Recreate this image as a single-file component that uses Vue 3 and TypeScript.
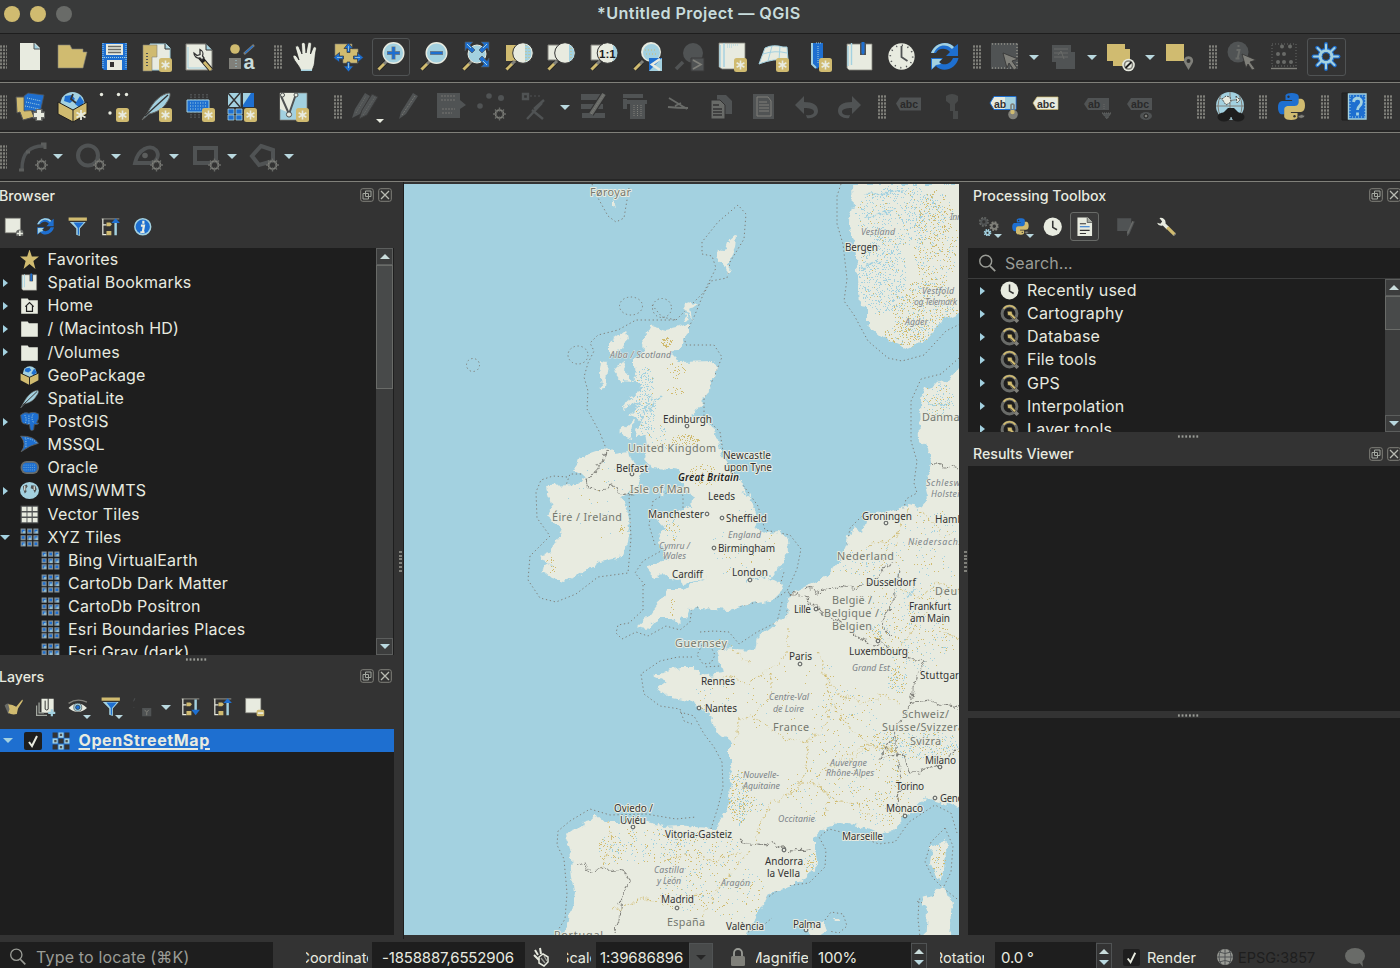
<script setup lang="ts">
interface Item { k: 'i' | 'h' | 'a' | 'g' | 's'; n?: string; w?: number; on?: boolean; menu?: boolean }
const I = (...names: string[]): Item[] => names.map(n => ({ k: 'i' as const, n }))
const H = (w = 20): Item => ({ k: 'h', w })
const A: Item = { k: 'a' }
const G = (w: number): Item => ({ k: 'g', w })

const bar1: Item[] = [
  ...I('new', 'open', 'save', 'layout', 'manager', 'style'), G(7), H(14),
  ...I('pan', 'pansel'), { k: 'i', n: 'zoomin', on: true },
  ...I('zoomout', 'zoomfull', 'zoomsel', 'zoomlayer', 'zoom11', 'zoomlast', 'zoomnext', 'newmap', 'new3d', 'newbook', 'book', 'clock', 'refresh'), G(3), H(15),
  ...I('select'), A, ...I('selval'), A, ...I('desel'), A, ...I('selloc'), G(5), H(15),
  ...I('identify', 'table'), { k: 'i', n: 'gear', on: true },
]
const bar2: Item[] = [
  ...I('dsm', 'gpkg', 'shp', 'feather', 'mem', 'mesh'), G(10), ...I('gpx'), G(18), H(12),
  { k: 'i', n: 'pencils', menu: true }, ...I('pencil', 'savee', 'addpt', 'vertex'), A, ...I('multi', 'trash', 'cut', 'copy', 'paste', 'undo', 'redo'),
  G(6), H(13), ...I('lab0', 'pin'), G(9), ...I('lab1', 'lab2'), G(9), ...I('lab3', 'lab4'),
  G(35), H(15), ...I('web'), G(3), H(17), ...I('python'), G(3), H(17), ...I('help'), H(24),
]
const bar3: Item[] = [
  ...I('arc'), A, ...I('circle'), A, ...I('ellipse'), A, ...I('rect'), A, ...I('poly'), A,
]

const tree = [
  ['star', 'Favorites', ''], ['book', 'Spatial Bookmarks', 'c'], ['home', 'Home', 'c'], ['folder', '/ (Macintosh HD)', 'c'],
  ['folder', '/Volumes', 'c'], ['gpkg2', 'GeoPackage', ''], ['feather2', 'SpatiaLite', ''], ['pg', 'PostGIS', 'c'],
  ['mssql', 'MSSQL', ''], ['oracle', 'Oracle', ''], ['globe', 'WMS/WMTS', 'c'], ['vtiles', 'Vector Tiles', ''], ['tiles', 'XYZ Tiles', 'o'],
  ['tiles', 'Bing VirtualEarth', 'n'], ['tiles', 'CartoDb Dark Matter', 'n'], ['tiles', 'CartoDb Positron', 'n'],
  ['tiles', 'Esri Boundaries Places', 'n'], ['tiles', 'Esri Gray (dark)', 'n'],
]
const algs = ['Recently used', 'Cartography', 'Database', 'File tools', 'GPS', 'Interpolation', 'Layer tools']

type L = [string, number, number, number, string]
const labels: L[] = [
  ['Føroyar', 590, 631, 192, 'g'], ['Bergen', 845, 878, 247, 'd'], ['Vestland', 861, 895, 231, 'r'], ['Inn', 950, 962, 216, 'r'],
  ['Vestfold', 922, 954, 290, 'r'], ['og Telemark', 914, 957, 301, 'r'], ['Agder', 905, 928, 321, 'r'],
  ['Alba / Scotland', 610, 671, 354, 'r'], ['Edinburgh', 663, 712, 419, 'd'], ['United Kingdom', 628, 716, 448, 'g'],
  ['Newcastle', 723, 771, 455, 'd'], ['upon Tyne', 724, 772, 467, 'd'], ['Belfast', 616, 648, 468, 'd'],
  ['Great Britain', 678, 739, 477, 'b'], ['Isle of Man', 630, 690, 489, 'g'], ['Leeds', 708, 735, 496, 'd'],
  ['Manchester', 648, 704, 514, 'd'], ['Sheffield', 726, 767, 518, 'd'], ['Éire / Ireland', 552, 622, 517, 'g'],
  ['England', 728, 761, 534, 'r'], ['Birmingham', 718, 775, 548, 'd'], ['Cymru /', 659, 690, 545, 'r'], ['Wales', 663, 686, 555, 'r'],
  ['Cardiff', 672, 703, 574, 'd'], ['London', 732, 768, 572, 'd'], ['Guernsey', 675, 727, 643, 'g'], ['Rennes', 701, 735, 681, 'd'],
  ['Nantes', 705, 737, 708, 'd'], ['Paris', 789, 812, 656, 'd'], ['France', 773, 809, 727, 'g'], ['Lille', 794, 811, 609, 'd'],
  ['België /', 832, 872, 600, 'g'], ['Belgique /', 824, 879, 613, 'g'], ['Belgien', 832, 872, 626, 'g'], ['Nederland', 837, 894, 556, 'g'],
  ['Düsseldorf', 866, 916, 582, 'd'], ['Deut', 935, 962, 591, 'g'], ['Frankfurt', 909, 951, 606, 'd'], ['am Main', 910, 950, 618, 'd'],
  ['Luxembourg', 849, 908, 651, 'd'], ['Grand Est', 852, 890, 667, 'r'], ['Stuttgart', 920, 963, 675, 'd'],
  ['Centre-Val', 769, 809, 696, 'r'], ['de Loire', 773, 804, 708, 'r'], ['Schweiz/', 902, 949, 714, 'g'], ['Suisse/Svizzera', 882, 964, 727, 'g'],
  ['Svizra', 910, 941, 741, 'g'], ['Auvergne', 830, 867, 762, 'r'], ['Rhône-Alpes', 826, 874, 772, 'r'], ['Milano', 925, 956, 760, 'd'],
  ['Torino', 896, 924, 786, 'd'], ['Genova', 940, 973, 798, 'd'], ['Monaco', 886, 923, 808, 'd'], ['Nouvelle-', 743, 779, 774, 'r'],
  ['Aquitaine', 743, 780, 785, 'r'], ['Occitanie', 778, 815, 818, 'r'], ['Marseille', 842, 883, 836, 'd'], ['Oviedo /', 614, 653, 808, 'd'],
  ['Uviéu', 620, 646, 820, 'd'], ['Vitoria-Gasteiz', 665, 732, 834, 'd'], ['Andorra', 765, 803, 861, 'd'], ['la Vella', 767, 800, 873, 'd'],
  ['Castilla', 654, 684, 869, 'r'], ['y León', 657, 681, 880, 'r'], ['Aragón', 721, 750, 882, 'r'], ['Madrid', 661, 694, 899, 'd'],
  ['España', 667, 705, 922, 'g'], ['València', 726, 764, 926, 'd'], ['Palma', 793, 821, 924, 'd'], ['Portugal', 554, 603, 935, 'g'],
  ['Danmark', 922, 970, 417, 'g'], ['Schleswig-', 926, 972, 482, 'r'], ['Holstein', 931, 965, 493, 'r'], ['Groningen', 862, 912, 516, 'd'],
  ['Hamburg', 935, 980, 519, 'd'], ['Niedersachsen', 908, 973, 541, 'r'],
]
const towns = [[750, 580], [722, 518], [714, 548], [816, 609], [800, 664], [878, 641], [784, 850], [677, 908], [905, 816], [935, 798], [687, 426], [632, 474], [633, 827], [707, 514], [699, 708], [940, 767], [886, 523], [806, 930]]

let seed = 7
const rnd = () => { seed = (seed * 16807) % 2147483647; return seed / 2147483647 }
// centre x, centre y, radius x, radius y, dots, blue share
const spots = [
  [900, 215, 45, 30, 520, 0.9], [882, 275, 24, 40, 520, 0.95], [935, 240, 22, 50, 420, 0.35], [925, 310, 32, 30, 560, 0.5], [905, 335, 22, 12, 120, 0.3],
  [667, 342, 6, 5, 45, 0], [676, 370, 10, 8, 26, 0], [674, 390, 10, 5, 16, 0], [645, 400, 10, 35, 240, 0.95], [685, 440, 14, 6, 70, 0], [703, 475, 14, 12, 60, 0],
  [658, 440, 10, 16, 40, 0.5], [672, 527, 8, 14, 44, 0.4], [672, 608, 3, 10, 10, 0], [622, 530, 3, 6, 14, 0], [550, 565, 6, 8, 16, 0],
  [738, 797, 10, 28, 200, 0.5], [745, 805, 18, 10, 70, 0.5], [645, 845, 45, 18, 150, 0.5], [610, 850, 14, 16, 60, 0.4], [700, 850, 40, 20, 160, 0.5], [685, 890, 30, 22, 120, 0.5],
  [735, 890, 30, 30, 100, 0.4], [925, 745, 36, 16, 260, 0.6], [885, 742, 14, 12, 70, 0.6], [915, 640, 40, 30, 200, 0.5], [897, 680, 10, 14, 90, 0.4], [905, 580, 50, 40, 220, 0.5],
  [880, 790, 32, 36, 200, 0.3], [850, 730, 40, 40, 120, 0.4], [815, 790, 30, 30, 80, 0.3], [850, 560, 30, 14, 60, 0.6], [938, 400, 16, 18, 120, 0.7], [810, 862, 6, 12, 60, 0.5],
  [938, 862, 7, 18, 50, 0.3], [800, 700, 60, 40, 90, 0.3], [745, 545, 35, 40, 70, 0.6], [600, 500, 35, 40, 30, 0.7], [715, 700, 22, 22, 40, 0.5], [930, 525, 28, 16, 50, 0.6], [878, 632, 12, 8, 60, 0.6],
]
let blue = ''
let gold = ''
for (const [cx, cy, rx, ry, n, b] of spots) {
  for (let i = 0; i < n; i++) {
    const a = rnd() * 6.283, r = Math.sqrt(rnd())
    const d = `M${Math.round(cx + Math.cos(a) * r * rx)} ${Math.round(cy + Math.sin(a) * r * ry)}h1v1h-1z`
    if (rnd() < b) blue += d
    else gold += d
  }
}
const spokes = [0, 45, 90, 135, 180, 225, 270, 315]
</script>

<template>
  <div class="app">
    <svg class="sprite" width="0" height="0">
      <defs>
        <g id="badge"><rect x="18" y="17" width="13" height="14" rx="2.5" fill="#d0bb70" /><path d="M24.5 19.5v9M20.6 21.7l7.8 4.6M28.4 21.7l-7.8 4.6" stroke="#e8ebe0" stroke-width="1.6" /></g>
        <g id="gbadge"><circle cx="24.5" cy="24" r="4" fill="none" stroke="#80807a" stroke-width="1.6" /><path d="M24.5 17.5v13M18 24h13M20 19.5l9 9M29 19.5l-9 9" stroke="#696b68" stroke-width="1.4" /><circle cx="24.5" cy="24" r="2.6" fill="#333" /></g>
        <g id="lens"><path d="M11 21l-7 7" stroke="#1e1e1e" stroke-width="4.4" /><path d="M9.500 22.500L3.500 28.500" stroke="#d0bb70" stroke-width="3" /><path d="M9 23l3-3" stroke="#80807a" stroke-width="3" /></g>
        <g id="abc"><path d="M2 15l4-6h21v13h-21z" fill="#505354" /><text x="6" y="19.500" class="tg">abc</text></g>
      </defs>
      <symbol id="new" viewBox="0 0 32 32"><path d="M7 2h15l5 5v22h-20z" fill="#e8ebe0" /><path d="M21 2v6h6" fill="#a3d1e0" stroke="#505354" /></symbol>
      <symbol id="open" viewBox="0 0 32 32"><path d="M2 4h12l2 4h11v3h4l-4 16h-25z" fill="#d0bb70" stroke="#80807a" stroke-width=".6" /></symbol>
      <symbol id="save" viewBox="0 0 32 32"><path d="M4 2h25v27h-23l-2-2z" fill="#1e6fd0" /><path d="M5 2v26M28 2v26" stroke="#a3d1e0" stroke-dasharray="1 1" /><path d="M8 3h17v11h-17zM9 19h15v10h-15z" fill="#e8ebe0" /><path d="M10 5.500h13M10 8.500h13M10 11.500h13" stroke="#696b68" stroke-width="1.4" /><path d="M12 21h4v5h-4z" fill="#333" /><path d="M4 16.500h25" stroke="#a3d1e0" stroke-dasharray="1 1" /></symbol>
      <symbol id="layout" viewBox="0 0 32 32"><path d="M9 3h16l4 4v22h-20z" fill="#e8ebe0" stroke="#a3d1e0" /><path d="M24 3v5h5" fill="#a3d1e0" stroke="#333" /><path d="M2 4h14v12h-5v14h-9z" fill="#d0bb70" stroke="#80807a" stroke-width=".6" /><path d="M6 12v15" stroke="#505354" stroke-width="2" stroke-dasharray="1 2" /><use href="#badge" /></symbol>
      <symbol id="manager" viewBox="0 0 32 32"><path d="M2 3h20l6 6v20h-26z" fill="#e8ebe0" stroke="#80807a" /><path d="M4 6v21h22" fill="none" stroke="#a3d1e0" /><path d="M22 3v6h6" fill="#a3d1e0" stroke="#333" /><path d="M16 16l11 13" stroke="#1e1e1e" stroke-width="5" /><path d="M20 21l7 8" stroke="#d0bb70" stroke-width="3" /><path d="M16 8.500a5 5 0 0 1 2.500 6.500l1.500 2-2 2-2-2a5 5 0 0 1-6-5l3 2.500 3-1z" fill="#e8ebe0" stroke="#333" stroke-width="1.300" /></symbol>
      <symbol id="style" viewBox="0 0 32 32"><circle cx="9" cy="8" r="4.800" fill="#d0bb70" /><path d="M18 13L28 4" stroke="#80807a" stroke-width="2.400" /><path d="M19 12L27 5" stroke="#1e6fd0" stroke-width="1.2" /><path d="M3 17h12v11h-12z" fill="#80807a" /><path d="M10 19v7" stroke="#a3d1e0" stroke-dasharray="1 2" /><text x="17.500" y="28" class="sa">a</text></symbol>
      <symbol id="pan" viewBox="0 0 32 32"><path d="M11 30c-1-5-6.500-9-8-14-.5-2.500 2.500-2.500 4 0l2 3L5.500 7c-.5-2.500 3-3 3.700-.5L12 13l-.5-9.500c0-2.700 3.600-2.700 3.800 0L16 12l1.800-9c.5-2.500 4-2 3.600.7L20.500 13l2.500-6c1-2.200 4-1.200 3.300 1.300C25 14 25 18 24.500 22c-.5 4-2 5-2.200 8z" fill="#e8ebe0" stroke="#1e1e1e" stroke-width=".7" /><path d="M11 29.300h11" stroke="#a3d1e0" stroke-width="1.500" /></symbol>
      <symbol id="pansel" viewBox="0 0 32 32"><path d="M3 3h17v5h6v14h-15v-4h-8z" fill="#d0bb70" stroke="#80807a" stroke-width=".6" /><g fill="#1e6fd0" stroke="#333" stroke-width=".7"><path d="M16.500 2l4.500 5.500h-3v4h-3v-4h-3z" /><path d="M16.500 31l5-6h-3.500v-4h-3v4h-3.500z" /><path d="M1.500 16.500l6-5v3.500h4v3h-4v3.500z" /><path d="M31.500 16.500l-6-5v3.500h-4v3h4v3.500z" /></g><path d="M16.500 5v5M5 16.500h5M23 16.500h5M16.500 22v5" stroke="#a3d1e0" stroke-width=".8" /></symbol>
      <symbol id="zoomin" viewBox="0 0 32 32"><use href="#lens" /><circle cx="18.500" cy="12" r="10.300" fill="#a3d1e0" stroke="#e8ebe0" stroke-width="1.400" /><path d="M18.500 5.500v13M12 12h13" stroke="#80807a" stroke-width="4" /><path d="M18.500 6v12M12.500 12h12" stroke="#1e6fd0" stroke-width="2.600" /></symbol>
      <symbol id="zoomout" viewBox="0 0 32 32"><use href="#lens" /><circle cx="18.500" cy="12" r="10.300" fill="#a3d1e0" stroke="#e8ebe0" stroke-width="1.400" /><path d="M12 12h13" stroke="#80807a" stroke-width="4" /><path d="M12.500 12h12" stroke="#1e6fd0" stroke-width="2.600" /></symbol>
      <symbol id="zoomfull" viewBox="0 0 32 32"><use href="#lens" /><circle cx="17" cy="13" r="9" fill="#a3d1e0" stroke="#e8ebe0" /><path d="M5 1h8l-3 3 5 5-3 3-5-5-2 3zM29 1h-8l3 3-5 5 3 3 5-5 2 3zM29 26h-8l3-3-5-5 3-3 5 5 2-3z" fill="#1e6fd0" stroke="#505354" stroke-width=".7" /><path d="M7 3l4 4M27 3l-4 4M27 24l-4-4" stroke="#a3d1e0" /></symbol>
      <symbol id="zoomsel" viewBox="0 0 32 32"><path d="M3 4h16v16h-16z" fill="#d0bb70" /><use href="#lens" /><circle cx="20" cy="12" r="10.300" fill="#e8ebe0" stroke="#333" /><path d="M22 3a9.500 9.500 0 0 1 0 18z" fill="#a3d1e0" /><path d="M23 4v16M26 7v11" stroke="#d0bb70" stroke-dasharray="1 2" /></symbol>
      <symbol id="zoomlayer" viewBox="0 0 32 32"><path d="M3 4h16v15h-16z" fill="#e8ebe0" stroke="#80807a" /><use href="#lens" /><circle cx="20" cy="12" r="10.300" fill="#e8ebe0" stroke="#333" /><path d="M24 3.500a9.500 9.500 0 0 1 0 17z" fill="#a3d1e0" /><path d="M26 7v11" stroke="#d0bb70" stroke-dasharray="1 2" /></symbol>
      <symbol id="zoom11" viewBox="0 0 32 32"><path d="M3 4h16v15h-16z" fill="#e8ebe0" stroke="#80807a" /><use href="#lens" /><circle cx="19.500" cy="12" r="10.300" fill="#e8ebe0" stroke="#333" /><path d="M25 4a9.500 9.500 0 0 1 0 16z" fill="#a3d1e0" /><text x="11" y="16.500" class="t11">1:1</text></symbol>
      <symbol id="zoomlast" viewBox="0 0 32 32"><use href="#lens" /><circle cx="20" cy="11" r="10" fill="#e8ebe0" /><circle cx="20.500" cy="11.500" r="8.500" fill="#a3d1e0" /><path d="M14 9h12M15 13h12" stroke="#d0bb70" stroke-dasharray="1 2" /><path d="M18 17h13v13h-13z" fill="#a3d1e0" /><path d="M18 17h13l-13 13z" fill="#1e6fd0" /><path d="M29 18l-8 5.500 8 5.500" fill="none" stroke="#e8ebe0" stroke-width="2.600" /></symbol>
      <symbol id="zoomnext" viewBox="0 0 32 32"><path d="M10 21l-7 7" stroke="#505354" stroke-width="3.500" /><circle cx="20" cy="12" r="10" fill="#505354" /><path d="M18 17h13v13h-13z" fill="#505354" stroke="#3a3a3a" /><path d="M20 19l8 4.500-8 4.500" fill="none" stroke="#80807a" stroke-width="1.600" /></symbol>
      <symbol id="newmap" viewBox="0 0 32 32"><path d="M3 2h26v26h-23l-3-2z" fill="#e8ebe0" stroke="#80807a" stroke-width=".8" /><path d="M8 2v24M4 4v22" stroke="#a3d1e0" stroke-width="1.400" /><path d="M11 4h12M11 6h6" stroke="#a3d1e0" stroke-dasharray="1 1" /><use href="#badge" /></symbol>
      <symbol id="new3d" viewBox="0 0 32 32"><path d="M7 7q8-4 18-1h4l1 13q-14-2-29 4z" fill="#e8ebe0" stroke="#a3d1e0" /><path d="M14 5l-4 15M22 5l-1 14M5 13q12-4 24-1" stroke="#a3d1e0" fill="none" /><use href="#badge" /></symbol>
      <symbol id="newbook" viewBox="0 0 32 32"><path d="M10 2h12v20l-6 6-6-5z" fill="#1e6fd0" /><path d="M11 2v21l4 4" stroke="#a3d1e0" stroke-width="2" fill="none" /><path d="M15 2h5M17 5v18" stroke="#a3d1e0" stroke-dasharray="1 1" /><use href="#badge" /></symbol>
      <symbol id="book" viewBox="0 0 32 32"><path d="M3 3h25v26h-23l-2-2z" fill="#e8ebe0" stroke="#80807a" stroke-width=".8" /><path d="M7.500 2v22M4 5v20" stroke="#a3d1e0" stroke-width="1.400" /><path d="M16 2h6v12h-6z" fill="#505354" /><path d="M17.500 1h3v11l-1.500 2-1.500-2z" fill="#1e6fd0" /></symbol>
      <symbol id="clock" viewBox="0 0 32 32"><circle cx="15.500" cy="15.500" r="13.200" fill="#e8ebe0" /><circle cx="15.500" cy="15.500" r="11.200" fill="none" stroke="#505354" stroke-width="1.600" stroke-dasharray="1.200 4.660" /><path d="M15.500 5v11l6 4" fill="none" stroke="#505354" stroke-width="1.800" /></symbol>
      <symbol id="refresh" viewBox="0 0 32 32"><path d="M2 12C6 1 19-1 25 6l4-3v12h-12l4-4C17 6 9 7 7 12z" fill="#1e6fd0" /><path d="M2 12C6 1 19-1 25 6l-2 2C17 2 8 4 5 12z" fill="#a3d1e0" /><path d="M29.500 17C27 29 13 32 7 25l-5 4v-12h12l-4 4c4 4 11 3 14-4z" fill="#1e6fd0" /><path d="M3 28v-10h10l-3 3 2 2-5 1z" fill="#a3d1e0" /></symbol>
      <symbol id="select" viewBox="0 0 32 32"><path d="M2 2h27v26h-27z" fill="#505354" /><path d="M3 27h26M28 3v24M3 3h26" stroke="#80807a" stroke-dasharray="1 2" stroke-width="2" /><path d="M14 12l15 6-6 2 5 7-3 2-5-7-2 5z" fill="#80807a" stroke="#333" stroke-width=".8" /></symbol>
      <symbol id="selval" viewBox="0 0 32 32"><path d="M5 4h19v7h4v17h-19v-7h-4z" fill="#505354" /><path d="M7 8h14M7 12h14M7 16h14" stroke="#696b68" stroke-width="1.200" /><path d="M11 14l3-4 3 8" stroke="#696b68" fill="none" /></symbol>
      <symbol id="desel" viewBox="0 0 32 32"><path d="M2 3h18v5h5v17h-17v-5h-6z" fill="#d0bb70" /><circle cx="23.500" cy="24" r="6.300" fill="#e8ebe0" /><circle cx="23.500" cy="24" r="4" fill="none" stroke="#80807a" stroke-width="1.600" /><path d="M20.500 27l6-6" stroke="#1e1e1e" stroke-width="1.800" /></symbol>
      <symbol id="selloc" viewBox="0 0 32 32"><path d="M3 3h18v17h-18z" fill="#d0bb70" /><path d="M25.500 29l-4-7a4.600 4.600 0 1 1 8 0z" fill="#80807a" /><circle cx="25.500" cy="20" r="2" fill="#333" /></symbol>
      <symbol id="identify" viewBox="0 0 32 32"><circle cx="13" cy="11" r="10.500" fill="#505354" /><path d="M13.500 4v2M11.500 9h3l-2 9M10.500 17.500h4" stroke="#696b68" stroke-width="2" fill="none" /><path d="M17 13l14 6-6 2 5 7-3 1-4-6-2 4z" fill="#80807a" stroke="#333" stroke-width=".8" /></symbol>
      <symbol id="table" viewBox="0 0 32 32"><path d="M4 3h24v22h-24z" fill="none" stroke="#696b68" stroke-dasharray="1 2" /><g fill="#696b68"><circle cx="14" cy="5.500" r="2" /><circle cx="22" cy="5.500" r="2" /><circle cx="10" cy="13" r="2" /><circle cx="16" cy="13" r="2" /><circle cx="10" cy="21" r="2" /><circle cx="16" cy="21" r="2" /><circle cx="23" cy="21" r="2" /></g><path d="M3 27.500h26" stroke="#80807a" stroke-width="1.400" /></symbol>
      <symbol id="gear" viewBox="0 0 32 32"><path v-for="a in spokes" :key="a" d="M16 3v5" :transform="`rotate(${a} 16 15.500)`" stroke="#1e6fd0" stroke-width="3.800" stroke-linecap="round" /><circle cx="16" cy="15.500" r="8.500" fill="#1e6fd0" /><path v-for="a in spokes" :key="'b' + a" d="M16 3.500v5" :transform="`rotate(${a} 16 15.500)`" stroke="#a3d1e0" stroke-width="2" stroke-linecap="round" /><circle cx="16" cy="15.500" r="5.600" fill="#333" stroke="#a3d1e0" stroke-width="3.400" /><circle cx="16" cy="15.500" r="4" fill="#333" stroke="#1e6fd0" /></symbol>

      <symbol id="dsm" viewBox="0 0 32 32"><path d="M3 6h10l8 20-11 3-3-8-3 1z" fill="#d0bb70" stroke="#505354" /><path d="M11 5l4-3 16 2-4 18q-8-4-16-2z" fill="#1e6fd0" stroke="#505354" stroke-width=".8" /><path d="M14 7l14 3M13 11l14 3M12 15l14 3" stroke="#a3d1e0" stroke-dasharray="1 1" /><path d="M26 18v12M20 24h12" stroke="#696b68" stroke-width="7" /><path d="M26 19v10M21 24h10" stroke="#e8ebe0" stroke-width="4" /></symbol>
      <symbol id="gpkg" viewBox="0 0 32 32"><circle cx="16.500" cy="13" r="12" fill="#a3d1e0" /><path d="M9 5l7-1 3 4-5 4-6-2zM19 13l5-8 4 6-4 6z" fill="#1e6fd0" /><path d="M17 3l-2 5 5 4" stroke="#333" stroke-width="1.800" fill="none" /><path d="M2 11l15 8 14-8v12l-14 8-15-8z" fill="#d0bb70" stroke="#1e1e1e" /><path d="M17 19v12" stroke="#1e1e1e" /><path d="M25 19v10M20.500 21.500l9 5M29.500 21.500l-9 5" stroke="#e8ebe0" stroke-width="1.800" /></symbol>
      <symbol id="shp" viewBox="0 0 32 32"><g fill="#e8ebe0"><circle cx="3.500" cy="3.500" r="1.700" /><circle cx="20.500" cy="3.500" r="1.700" /><circle cx="28.500" cy="3.500" r="1.700" /><circle cx="12" cy="22" r="1.700" /></g><use href="#badge" /></symbol>
      <symbol id="feather" viewBox="0 0 32 32"><path d="M1 29l6-8C12 11 20 3 28 2c2 0 1 5-2 9-4 7-10 10-18 12z" fill="#a3d1e0" stroke="#696b68" /><path d="M4 25L27 4" stroke="#333" stroke-width="1.300" /><use href="#badge" /></symbol>
      <symbol id="mem" viewBox="0 0 32 32"><path d="M7 3v25M11 3v25M15 3v25M19 3v25M23 3v25" stroke="#505354" stroke-width="1.800" stroke-dasharray="1.500 1" /><path d="M3 9h22v12h-22z" fill="#1e6fd0" stroke="#a3d1e0" /><path d="M6 12h17M6 15h17M6 18h17" stroke="#a3d1e0" stroke-dasharray="1 1.500" /><use href="#badge" /></symbol>
      <symbol id="mesh" viewBox="0 0 32 32"><path d="M2 2h12.500v14h-12.500z" fill="#a3d1e0" /><path d="M2 2l12 14M14 2l-12 14" stroke="#333" stroke-width="1.400" /><path d="M17 2h11v14h-11z" fill="#1e6fd0" /><path d="M17 2h8l-8 12z" fill="#a3d1e0" /><path d="M2 18h6v5h-6zM10 18h6v5h-6zM2 24h6v5h-6zM10 24h6v5h-6z" fill="#1e6fd0" stroke="#a3d1e0" stroke-width=".8" /><use href="#badge" /></symbol>
      <symbol id="gpx" viewBox="0 0 32 32"><path d="M2 2h27v27h-27z" fill="#a3d1e0" stroke="#80807a" stroke-width=".7" /><path d="M2 2h16l-7 20-9-4z" fill="#e8ebe0" /><path d="M3 5l8 18 7-20" fill="none" stroke="#505354" stroke-width="2" /><circle cx="4.500" cy="4" r="2" fill="#e8ebe0" stroke="#505354" /><circle cx="18" cy="4" r="2" fill="#e8ebe0" stroke="#505354" /><circle cx="11" cy="23.500" r="2.600" fill="#e8ebe0" stroke="#505354" /><use href="#badge" /></symbol>
      <symbol id="pencils" viewBox="0 0 32 32"><path d="M3 27l3-9L16 2l5 3-10 18z" fill="#505354" /><path d="M10 28l3-9L23 3l6 3-11 18z" fill="#505354" stroke="#3a3a3a" /><path d="M14 24L26 6M7 22L17 5" stroke="#696b68" stroke-dasharray="1 1" /></symbol>
      <symbol id="pencil" viewBox="0 0 32 32"><path d="M7 28l2-7L21 2l5 3-12 18z" fill="#505354" /><path d="M10 24L23 5" stroke="#80807a" stroke-dasharray="1 1" /></symbol>
      <symbol id="savee" viewBox="0 0 32 32"><path d="M2 2h23v7l6 5-6 4v9h-23z" fill="#505354" /><path d="M6 5h14M6 9h14M7 18h13M7 22h10" stroke="#696b68" stroke-dasharray="2 1" stroke-width="1.300" /></symbol>
      <symbol id="addpt" viewBox="0 0 32 32"><g fill="#505354"><circle cx="12" cy="5" r="2.800" /><circle cx="24" cy="7" r="3" /><circle cx="3" cy="15" r="2.800" /></g><g transform="translate(-2 -1)"><use href="#gbadge" /></g></symbol>
      <symbol id="vertex" viewBox="0 0 32 32"><path d="M3 3h5v5h-5zM7 28L22 12M12 19l11 9M24 9L14 18" fill="none" stroke="#505354" stroke-width="2.400" /><path d="M10 5h12" stroke="#505354" stroke-dasharray="2 2" /></symbol>
      <symbol id="multi" viewBox="0 0 32 32"><path d="M3 3h22v6h-22zM3 13h22v5h-22zM4 22h23v5h-23z" fill="#505354" /><path d="M13 23L26 3" stroke="#333" stroke-width="6" /><path d="M13 23L26 3" stroke="#696b68" stroke-width="4" /><path d="M13 23L26 3" stroke="#80807a" stroke-dasharray="1 1" /></symbol>
      <symbol id="trash" viewBox="0 0 32 32"><path d="M3 3h20v4h-20zM3 8h4v10h-4zM7 9h20v4h-2v15h-15v-15h-3z" fill="#505354" /><path d="M14 14v12M17.500 14v12M21 14v12" stroke="#80807a" stroke-dasharray="1 1" /></symbol>
      <symbol id="cut" viewBox="0 0 32 32"><path d="M6 7l18 11M5 16q10 1 20 1M12 15l6-3" stroke="#696b68" stroke-width="1.800" fill="none" /></symbol>
      <symbol id="copy" viewBox="0 0 32 32"><path d="M12 4h9l6 6v13h-15z" fill="#505354" /><path d="M6 9h9l5 5v14h-14z" fill="#696b68" stroke="#333" /><path d="M8 14h6M8 18h9M8 21h9M8 24h9" stroke="#333" stroke-width="1.400" /></symbol>
      <symbol id="paste" viewBox="0 0 32 32"><path d="M5 3h21v25h-21z" fill="#505354" /><path d="M9 6h11l3 4v15h-14z" fill="#505354" stroke="#80807a" /><path d="M11 11h8M11 14h10M11 17h10M11 20h10" stroke="#80807a" /></symbol>
      <symbol id="undo" viewBox="0 0 32 32"><path d="M4 14L13 5v6c9 0 14 3 14 9 0 5-6 8-11 7l-1-3c5 1 8-1 8-3 0-3-4-4-10-4v6z" fill="#505354" /></symbol>
      <symbol id="redo" viewBox="0 0 32 32"><path d="M28 14L19 5v6c-9 0-14 3-14 9 0 5 6 8 11 7l1-3c-5 1-8-1-8-3 0-3 4-4 10-4v6z" fill="#505354" /></symbol>
      <symbol id="lab0" viewBox="0 0 32 32"><use href="#abc" y="-2.500" /></symbol>
      <symbol id="pin" viewBox="0 0 32 32"><path d="M9 5q6-4 12 0v5l-3 3v7h-5v-7l-4-3zM16 20h5v8h-5z" fill="#484a4a" /></symbol>
      <symbol id="lab1" viewBox="0 0 32 32"><path d="M2 12l4-6.500h22v13h-22z" fill="#e8ebe0" stroke="#1e6fd0" /><path d="M17 6h10v12h-10z" fill="#a3d1e0" /><text x="6" y="16.500" class="tk">ab</text><circle cx="25" cy="23.500" r="4.800" fill="#80807a" /><path d="M23 20v-6q1.500-2 3 0v6" stroke="#80807a" fill="none" stroke-width="1.600" /><circle cx="24.500" cy="21" r="2.200" fill="#d0bb70" /></symbol>
      <symbol id="lab2" viewBox="0 0 32 32"><path d="M3 12l4-6h21v12.500h-21z" fill="#e8ebe0" stroke="#d0bb70" stroke-width=".7" /><text x="7" y="16.500" class="tk">abc</text></symbol>
      <symbol id="lab3" viewBox="0 0 32 32"><path d="M3 13l4-6h21v12h-21z" fill="#505354" /><text x="7" y="17" class="tg">ab</text><path d="M23 13v6M21 22h9l-4 6z" stroke="#696b68" fill="#505354" stroke-dasharray="1 1" /></symbol>
      <symbol id="lab4" viewBox="0 0 32 32"><path d="M3 13l4-6h21v12h-21z" fill="#505354" /><text x="7" y="17" class="tg">abc</text><ellipse cx="22" cy="25" rx="6" ry="4" fill="#505354" /><circle cx="22" cy="25" r="2" fill="#80807a" stroke="#1e1e1e" /></symbol>
      <symbol id="web" viewBox="0 0 32 32"><circle cx="16" cy="15" r="14" fill="#a3d1e0" /><path d="M16 1v28M2 15h28M5 7q11 5 22 0M7 4q-6 11 0 22M25 4q6 11 0 22" fill="none" stroke="#80807a" /><path d="M8 8l4-3 4 1 1 5-5 3zM22 5l4 4-3 3z" fill="#e8ebe0" stroke="#505354" stroke-dasharray="2 1" /><path d="M10 21l4-4h6l4 4 5 5h-24z" fill="#1e1e1e" /><ellipse cx="10" cy="26" rx="6.500" ry="4.500" fill="#1e1e1e" /><ellipse cx="24" cy="26" rx="6.500" ry="4.500" fill="#1e1e1e" /></symbol>
      <symbol id="python" viewBox="0 0 32 32"><path d="M15.800 2C9 2 9.500 5 9.500 5v4h6.600v1H6.500S2 9.500 2 16.500s4 6.800 4 6.800h2.400V20s-.1-4 4-4H19s3.800 0 3.800-3.700V6S23.400 2 15.800 2z" fill="#1e6fd0" /><path d="M15.800 2C9 2 9.500 5 9.500 5v4h6.600v1H6.500S2 9.500 2 16.500s4 6.800 4 6.800h2.400V20s-.1-4 4-4H19s3.800 0 3.800-3.700V6S23.400 2 15.800 2z" transform="rotate(180 15.500 15.500)" fill="#d0bb70" /><circle cx="12.500" cy="5.800" r="1.200" fill="#333" /><circle cx="18.500" cy="25.200" r="1.200" fill="#333" /><path d="M22 25q4-3 7 0-3 4-7 1z" fill="#80807a" stroke="#333" stroke-width=".6" /></symbol>
      <symbol id="help" viewBox="0 0 32 32"><path d="M3 2h7v27h-7z" fill="#262626" stroke="#1e1e1e" /><path d="M9.500 3h17.500v25h-17.500z" fill="#1e6fd0" stroke="#a3d1e0" stroke-width="1.400" /><path d="M11 5h15v21h-15z" fill="none" stroke="#a3d1e0" stroke-dasharray="1 2" /><path d="M14.500 11c.5-5 8-5 8 0 0 4-4 4-4 8M18.500 21.500v3" fill="none" stroke="#a3d1e0" stroke-width="2.800" /></symbol>

      <symbol id="arc" viewBox="0 0 32 32"><path d="M5 28Q5 4 28 5" fill="none" stroke="#505354" stroke-width="3.400" /><path d="M2 29h5M9 11h4M24 3h4v5" stroke="#5c5e5d" stroke-width="3" fill="none" /><use href="#gbadge" /></symbol>
      <symbol id="circle" viewBox="0 0 32 32"><circle cx="13" cy="14.500" r="10" fill="none" stroke="#505354" stroke-width="4" /><use href="#gbadge" /></symbol>
      <symbol id="ellipse" viewBox="0 0 32 32"><path d="M3 22C6 8 18 3 24 9c4 5 1 12-6 13z" fill="none" stroke="#505354" stroke-width="3.800" /><circle cx="13" cy="14.500" r="2.800" fill="#5c5e5d" /><use href="#gbadge" /></symbol>
      <symbol id="rect" viewBox="0 0 32 32"><path d="M5 7h21v15h-21z" fill="none" stroke="#505354" stroke-width="4" /><use href="#gbadge" /></symbol>
      <symbol id="poly" viewBox="0 0 32 32"><path d="M13 5l12 4v11l-14 4-7-9z" fill="none" stroke="#505354" stroke-width="4" /><use href="#gbadge" /></symbol>

      <symbol id="star" viewBox="0 0 32 32"><path d="M16 -1l4 12h12l-9.500 7.500L26 32l-10-8.500L6 32l3.500-13.500L0 11h12z" fill="#d0bb70" /></symbol>
      <symbol id="home" viewBox="0 0 32 32"><path d="M2 4h11l2 3h15v23h-28z" fill="#e8ebe0" /><path d="M9 18l7-7 7 7M11 17v9h10v-9" fill="none" stroke="#1e1e1e" stroke-width="2" /></symbol>
      <symbol id="folder" viewBox="0 0 32 32"><path d="M2 4h11l2 3h15v23h-28z" fill="#e8ebe0" /></symbol>
      <symbol id="gpkg2" viewBox="0 0 32 32"><circle cx="16.500" cy="12" r="11.500" fill="#a3d1e0" /><path d="M9 4l7-1 3 4-5 4-6-2zM19 12l5-8 4 6-4 6z" fill="#1e6fd0" /><path d="M1 12l15 7 15-7v12l-15 8-15-8z" fill="#d0bb70" /><path d="M16 19v13M1 12l15 7 15-7" fill="none" stroke="#1e1e1e" stroke-width="1.600" /></symbol>
      <symbol id="feather2" viewBox="0 0 32 32"><path d="M1 32l5-9C12 12 20 3 30 2c2 2 1 5-2 9-4 7-10 12-20 14z" fill="#a3d1e0" stroke="#696b68" /><path d="M4 28L29 4" stroke="#333" stroke-width="1.600" /></symbol>
      <symbol id="pg" viewBox="0 0 32 32"><path d="M1 5q7-6 14-3 8-4 16 1 3 7-3 15l4 1q-3 3-8 2l-1 9q-5 3-6-2l-1-7q-4 1-6-1-7 1-8-7z" fill="#1e6fd0" stroke="#505354" stroke-width="1.500" /><path d="M8 5q4 7 1 14M22 4q-4 6 1 14M15 6v14" fill="none" stroke="#a3d1e0" stroke-width="1.500" stroke-dasharray="2 2" /></symbol>
      <symbol id="mssql" viewBox="0 0 32 32"><path d="M1 2q22-1 30 12-14 3-29 14 10-13-1-26z" fill="#1e6fd0" stroke="#696b68" stroke-width="1.300" /><path d="M8 5q16 2 20 9M10 20V7" fill="none" stroke="#a3d1e0" stroke-width="1.500" stroke-dasharray="2 2" /></symbol>
      <symbol id="oracle" viewBox="0 0 32 32"><rect x="1" y="5" width="31" height="22" rx="10" fill="#696b68" /><rect x="4" y="8" width="25" height="16" rx="7" fill="#1e6fd0" /><path d="M6 12h21M6 16h21M6 20h21" stroke="#a3d1e0" stroke-width="1.500" stroke-dasharray="1.500 2" opacity=".7" /></symbol>
      <symbol id="globe" viewBox="0 0 32 32"><ellipse cx="16" cy="16" rx="16" ry="14.500" fill="#a3d1e0" /><path d="M5 9l6-3 2 3-3 4 1 5-3 3-2-6zM19 7l7 1 2 6-3 6-3-6-4-2z" fill="#505354" /><path d="M8 8v8M24 9v6" stroke="#e8ebe0" stroke-width="2" /></symbol>
      <symbol id="vtiles" viewBox="0 0 32 32"><path d="M1 1h30v30h-30z" fill="#505354" /><path d="M3 3h8v7h-8zM12.500 3h7v7h-7zM21.500 3h8v7h-8zM3 12.500h8v7h-8zM12.500 12.500h7v7h-7zM21.500 12.500h8v7h-8zM3 22h8v7h-8zM12.500 22h7v7h-7zM21.500 22h8v7h-8z" fill="#e8ebe0" /></symbol>
      <symbol id="tiles" viewBox="0 0 32 32"><path d="M1 1h8.500v8.500h-8.500zM12 1h8.500v8.500h-8.500zM22.500 1h8.500v8.500h-8.500zM1 12h8.500v8.500h-8.500zM12 12h8.500v8.500h-8.500zM22.500 12h8.500v8.500h-8.500zM1 22.500h8.500v8.500h-8.500zM12 22.500h8.500v8.500h-8.500zM22.500 22.500h8.500v8.500h-8.500z" fill="#80909a" /><path d="M3 3h4.500v4h-4.500zM14 3h4.500v4h-4.500zM24.500 3h4.500v4h-4.500zM3 14h4.500v4h-4.500zM14 14h4.500v4h-4.500zM24.500 14h4.500v4h-4.500zM3 24.500h4.500v4h-4.500zM14 24.500h4.500v4h-4.500zM24.500 24.500h4.500v4h-4.500z" fill="#1e6fd0" /><path d="M5 5h4v4h-4zM26 5h4v4h-4zM15 16h4v4h-4zM5 26h4v4h-4zM26 16h4v4h-4z" fill="#a3d1e0" opacity=".7" /></symbol>
      <symbol id="checker" viewBox="0 0 32 32"><path d="M1 1h9v9h-9zM22 1h9v9h-9zM11.500 11.500h9v9h-9zM1 22h9v9h-9zM22 22h9v9h-9z" fill="#333" /><path d="M11.500 1h9v9h-9zM1 11.500h9v9h-9zM22 11.500h9v9h-9zM11.500 22h9v9h-9z" fill="#a3d1e0" /><path d="M14 3h4v4h-4zM4 14h4v4h-4zM24 14h4v4h-4zM14 25h4v4h-4z" fill="#505354" /></symbol>
      <symbol id="addlayer" viewBox="0 0 32 32"><path d="M2 2h25v24h-25z" fill="#e8ebe0" stroke="#80807a" /><circle cx="26" cy="27" r="6.500" fill="#696b68" /><path d="M26 22v10M21 27h10" stroke="#e8ebe0" stroke-width="2.600" /></symbol>
      <symbol id="filter" viewBox="0 0 32 32"><path d="M1 1h30v5h-30z" fill="#d0bb70" /><path d="M3 8h26l-9.500 11v12l-6-2V19z" fill="#a3d1e0" /><path d="M9 9h17l-8 9v11h-2V18z" fill="#1e6fd0" /></symbol>
      <symbol id="collapse" viewBox="0 0 32 32"><path d="M1 3h29" stroke="#80807a" stroke-width="2" /><path d="M3 3v26h6M3 13h6" stroke="#e8ebe0" stroke-width="2" fill="none" /><path d="M9 9h6l3 3-3 3h-6zM9 23h8v7h-8z" fill="#d0bb70" /><path d="M24 30V6" stroke="#a3d1e0" stroke-width="4" /><path d="M17 10l7-8 7 8z" fill="#1e6fd0" /></symbol>
      <symbol id="expand" viewBox="0 0 32 32"><path d="M1 3h29" stroke="#80807a" stroke-width="2" /><path d="M3 3v26h6M3 13h6" stroke="#e8ebe0" stroke-width="2" fill="none" /><path d="M9 9h6l3 3-3 3h-6zM9 23h8v7h-8z" fill="#d0bb70" /><path d="M24 4v20" stroke="#a3d1e0" stroke-width="4" /><path d="M17 21l7 9 7-9z" fill="#1e6fd0" /></symbol>
      <symbol id="info" viewBox="0 0 32 32"><circle cx="16" cy="16" r="13" fill="#1e6fd0" stroke="#a3d1e0" stroke-width="2.500" /><path d="M17 6v5M13 14h5l-2 11M12 25h7" stroke="#e8ebe0" stroke-width="3.600" fill="none" /></symbol>
      <symbol id="brush" viewBox="0 0 32 32"><path d="M1 14q3-4 7-3l4 14-5 3z" fill="#696b68" /><path d="M7 12l7 1 6 3 10-12 1 2-8 13-2 9q-8 2-14-2l2-6z" fill="#d0bb70" /></symbol>
      <symbol id="group" viewBox="0 0 32 32"><path d="M9 3h20v23h-20z" fill="#e8ebe0" /><path d="M1 14v16h17M5 9v17h8" fill="none" stroke="#a3a8a0" stroke-width="2" /><path d="M15 6v14q3 3 5 0V2" fill="none" stroke="#333" stroke-width="1.600" /><path d="M26 20v12M20 26h12" stroke="#a3d1e0" stroke-width="3.600" /></symbol>
      <symbol id="eye" viewBox="0 0 34 32"><path d="M1 10q15-10 32-2" fill="none" stroke="#80807a" stroke-width="2.500" /><path d="M1 18q16-15 32 0-16 14-32 0z" fill="#e8ebe0" /><circle cx="17" cy="17" r="7" fill="#a3d1e0" stroke="#333" /><circle cx="17" cy="17" r="3.800" fill="#1e6fd0" stroke="#1e1e1e" /></symbol>
      <symbol id="expr" viewBox="0 0 32 32"><path d="M3 2l-2 5M1 17h1" stroke="#505354" stroke-width="1.500" /><path d="M15 18h15v14h-15z" fill="#505354" /><path d="M19 21l3.500 4 3.500-4M22.500 25v5" stroke="#80807a" fill="none" stroke-width="1.500" /></symbol>
      <symbol id="rmlayer" viewBox="0 0 32 32"><path d="M1 2h25v24h-25z" fill="#e8ebe0" stroke="#80807a" /><rect x="19" y="21" width="13" height="11" rx="3" fill="#d0bb70" /><path d="M21 26.500h9" stroke="#e8ebe0" stroke-width="2.600" /></symbol>
      <symbol id="gears" viewBox="0 0 32 32"><g fill="none"><circle cx="8" cy="8" r="5.500" stroke="#696b68" stroke-width="5" stroke-dasharray="2.600 1.700" /><circle cx="8" cy="8" r="4.500" stroke="#505354" stroke-width="3" /><circle cx="25" cy="15" r="5.500" stroke="#80807a" stroke-width="5" stroke-dasharray="2.600 1.700" /><circle cx="25" cy="15" r="4.500" stroke="#80807a" stroke-width="3" /><circle cx="14" cy="26" r="4" stroke="#a3d1e0" stroke-width="4.500" stroke-dasharray="1.900 1.240" /><circle cx="14" cy="26" r="3.200" stroke="#a3d1e0" stroke-width="2" /></g></symbol>
      <symbol id="hist" viewBox="0 0 32 32"><circle cx="16" cy="16" r="15" fill="#e8ebe0" /><path d="M16 6v11l7 4" fill="none" stroke="#333" stroke-width="2.600" /></symbol>
      <symbol id="doc" viewBox="0 0 32 32"><path d="M4 1h17l7 7v24h-24z" fill="#e8ebe0" /><path d="M20 1v8h8" fill="#a3a8a0" stroke="#333" /><path d="M8 11h10M8 22h16M8 27h10" stroke="#333" stroke-width="1.800" /><path d="M8 16h16" stroke="#1e6fd0" stroke-width="1.800" /></symbol>
      <symbol id="edit" viewBox="0 0 32 32"><path d="M2 2h23v8l6-3-9 21-4 4v-9h-16z" fill="#505354" /><path d="M28 7l-9 20" stroke="#696b68" stroke-width="2.500" /></symbol>
      <symbol id="wrench" viewBox="0 0 32 32"><path d="M4 1.500a8 8 0 0 1 10 9l6 6-4 4-6.500-6.500a8 8 0 0 1-9.500-4.500l5.500 1.500 3-3.500z" fill="#e8ebe0" /><path d="M17 17l12 12" stroke="#d0bb70" stroke-width="5.500" /><path d="M26 32l6-6" stroke="#80807a" stroke-width="2" /></symbol>
      <symbol id="q" viewBox="0 0 32 32"><circle cx="16" cy="16" r="12.500" fill="none" stroke="#696b68" stroke-width="5" /><path d="M6 8a12.500 12.500 0 0 1 20 0" fill="none" stroke="#d0bb70" stroke-width="2.500" /><path d="M19 19l11 11" stroke="#80807a" stroke-width="6" /><path d="M12 12h8l1 5 6 6-3 3-6-6-5-1z" fill="#d0bb70" stroke="#1e1e1e" /></symbol>
      <symbol id="mag" viewBox="0 0 32 32"><circle cx="13" cy="12" r="10" fill="none" stroke="#9a9c96" stroke-width="2.400" /><path d="M20 20l9 9" stroke="#9a9c96" stroke-width="3" /></symbol>
      <symbol id="float" viewBox="0 0 14 14"><rect x=".7" y=".7" width="12.600" height="12.600" rx="2" fill="none" stroke="#80807a" /><path d="M5.500 3h5.500v5.500h-5.500zM3 5.500h5.500v5.500h-5.500z" fill="none" stroke="#a3a8a0" /></symbol>
      <symbol id="close" viewBox="0 0 14 14"><rect x=".7" y=".7" width="12.600" height="12.600" rx="2" fill="none" stroke="#80807a" /><path d="M3 3l8 8M11 3l-8 8" stroke="#b8bab2" stroke-width="1.300" /></symbol>
    </svg>

    <header class="title"><i class="light" /><i class="light" /><i class="light off" /><span>*Untitled Project — QGIS</span></header>
    <div v-for="(bar, bi) in [bar1, bar2, bar3]" :key="bi" class="bar" :class="'bar' + bi">
      <span class="grip first" />
      <template v-for="(t, i) in bar" :key="i">
        <span v-if="t.k === 'i'" class="tool" :class="{ on: t.on, menu: t.menu, shape: bi === 2 }"><svg class="ic"><use :href="'#' + t.n" /></svg></span>
        <span v-else-if="t.k === 'h'" class="gw" :style="{ width: t.w + 'px' }"><i class="grip" /></span>
        <span v-else-if="t.k === 'a'" class="aw"><i class="down" /></span>
        <span v-else :style="{ width: t.w + 'px' }" />
      </template>
    </div>

    <main class="main">
      <aside class="left">
        <div class="ptitle"><b>Browser</b><svg><use href="#float" /></svg><svg><use href="#close" /></svg></div>
        <div class="ptools"><svg v-for="n in ['addlayer', 'refresh', 'filter', 'collapse', 'info']" :key="n"><use :href="'#' + n" /></svg></div>
        <div class="box browser">
          <ul class="tree">
            <li v-for="([ic, name, st], i) in tree" :key="i" :class="{ nest: st === 'n' }">
              <i class="tw" :class="{ shut: st === 'c', open: st === 'o' }" /><svg><use :href="'#' + ic" /></svg>{{ name }}
            </li>
          </ul>
          <div class="scroll"><span class="sb"><i class="up" /></span><span class="thumb" /><span class="track" /><span class="sb"><i class="down" /></span></div>
        </div>
        <div class="split" />
        <div class="ptitle lay"><b>Layers</b><svg><use href="#float" /></svg><svg><use href="#close" /></svg></div>
        <div class="ptools lt">
          <svg><use href="#brush" /></svg><svg><use href="#group" /></svg>
          <span class="mini"><svg><use href="#eye" /></svg></span><span class="mini"><svg><use href="#filter" /></svg></span>
          <svg><use href="#expr" /></svg><i class="down" /><svg><use href="#expand" /></svg><svg><use href="#collapse" /></svg><svg><use href="#rmlayer" /></svg>
        </div>
        <div class="box layers">
          <div class="sel"><i class="down" /><span class="check"><svg viewBox="0 0 18 18"><path d="M5 10l3 4 5-10" /></svg></span><svg class="lic"><use href="#checker" /></svg><b>OpenStreetMap</b></div>
        </div>
      </aside>
      <div class="vsplit" />
      <svg class="map" viewBox="404 184 555 751" width="555" height="751">
        <defs>
          <filter id="rough" x="0" y="0" width="100%" height="100%"><feTurbulence type="fractalNoise" baseFrequency=".12" numOctaves="4" seed="4" /><feDisplacementMap in="SourceGraphic" scale="9" xChannelSelector="R" yChannelSelector="G" /></filter>
          <clipPath id="landclip"><use href="#land" /></clipPath>
          <path id="land" d="M650 326L664 330 690 324 690 334 682 343 673 354 681 362 713 361 717 367 714 377 708 393 700 407 694 411 690 417 703 417 712 427 719 440 722 457 733 473 742 482 750 497 752 507 757 513 755 526 767 533 780 532 788 539 789 552 783 564 770 580 781 583 783 589 772 600 747 605 730 610 700 608 689 609 687 614 678 623 670 619 657 619 648 629 637 627 648 617 659 603 662 597 667 590 682 590 693 583 706 575 696 580 683 584 667 575 653 576 645 567 667 559 663 547 657 537 664 527 658 518 683 510 692 507 693 499 687 490 682 482 680 471 667 469 652 467 645 458 647 447 645 433 636 437 642 422 630 414 640 404 630 397 641 390 635 380 634 367 634 357 645 350 643 340z
          M625 331L609 343 609 352 622 350 627 340zM602 362l6 1-3 26-4 1-1-15zM614 371l9-9 5 10 6 10-12-1zM618 434l15-14-3 18zM600 390l-2 1zM622 405l12-6 4 4-14 6z
          M582 457L593 453 608 448 614 454 630 452 633 467 641 475 637 487 627 493 622 498 627 510 629 527 627 543 622 557 600 562 580 575 563 581 552 579 545 573 541 571 550 564 540 557 552 554 554 545 563 530 546 515 552 507 548 493 547 486 577 485 588 477 573 470z
          M852 184L853 207 848 223 855 247 857 267 860 305 867 306 867 323 887 340 907 349 927 340 943 320 970 308 970 184z
          M970 355L947 380 925 388 919 403 920 440 928 447 930 463 926 480 930 497 920 508 907 506 867 517 863 534 853 526 847 543 840 560 823 580 803 587 787 598 785 617 757 637 755 650 733 649 718 650 723 672 700 675 695 667 680 667 667 670 655 677 667 682 657 689 667 697 688 701 697 705 712 717 717 732 730 743 730 763 731 783 727 810 716 828 693 827 680 825 663 826 647 822 607 822 597 817 584 821 583 828 565 834 570 850 573 877 575 893 567 927 563 945 743 945 752 923 770 893 797 883 818 865 815 850 815 837 827 827 843 822 862 826 880 834 893 831 907 815 927 798 970 811z
          M945 838L947 857 940 881 930 863 932 847 943 844zM943 887L953 903 949 945 925 945 927 910 920 897 932 894zM808 930l16-8 3 8-12 8zM831 919l7 0 2 3-7 0z
          M736 235L735 247 729 260 728 276 723 263 717 261 719 250 725 251 728 242zM684 304l8-3 4 4-6 4 2 10-5-8zM613 202l3 6-3-2zM684 311l5 7-4 1zM658 492l6-5-2 8zM708 653l3 1z" />
        </defs>
        <path d="M404 184h555v751h-555z" fill="#a3d1e0" />
        <g class="sea"><path d="M592 184l6 14 10 18 8 6 8-4 5-30" /><circle cx="473" cy="365" r="6.500" /><ellipse cx="631" cy="306" rx="11.500" ry="9" /><circle cx="662" cy="308" r="9.500" /><ellipse cx="578" cy="355" rx="10" ry="9" />
          <path d="M841 184l-4 12 0 28 6 20 4 35-3 22 10 14 14 26 20 17 14 3 22-6 22-24 14-7M959 358l-18 16-20 5-10 22v40l6 20-3 22 3 10-11 6-2 9-20 8-22 0-12 12-6 34-10 18-25 18-22 12 0 25-14 10-17 18-2 14-10-2-10-10-14 1-16 1" />
          <path d="M676 320l28-28 12-24-4-12-10-2 0-12 16-20 20-17 8 9-2 25-14 23-3 16-16 3-8 14-9 22-10 20 2 8 28 0 8 12-8 20-10 22 0 17 16 16 4 26 14 20 20 28 7 24 25 5 11 14-4 20-10 22-12 8M652 305l10 12 14 3h-40l-18 10-20 5-8 8 4 8-6 12-4 14 4 14-1 18 13 24 7 18-1 15-6 3-16 5-14 0-10 28M567 477l-14-1-12 4-5 12 1 26 13 18-20 20-2 24 12 18 16 4 20-8 22-17 30-4 3-35-2-42 7-8" />
          <path d="M643 585v25l-14 13-11 2-2 8 6 6 14-7 12 4 18-10 14 4 10-8 2-15 22 1 14-3 14 1 22-6 14-8 6-20M645 585l-10-12 8-12 18-10M655 545l-6-20 4-24 25-15 5 10 0 20M700 632l14-1 15 1 10 12 18-12 20-10 5-20M692 657l-14 0-18 4-19 13 3 20 16 12 20 3 4 12 8 3M680 712l14 4 10 18 10 13 8 15 1 25-5 20-8 25M555 935l10-16 2-26-3-34-7-14 1-14 12-10 20-12 20 6 36-1 30 5 20-2" />
          <path d="M728 945l18-20 18-25 20-14 25-3 16-16 1-17-7-13 10-8 12 3 16 4 22 8 16-2 14-20 26-17 16 8 6 20M945 828l-14 14-6 20 8 16 10 10-14 12-10-1-1 20 2 18M945 828l8 18-2 26-8 16 18 14M930 905l-14-4M825 920l6-8 12 2 4 12-8 7-10-2M748 932l12-4 12-10M702 645l-5 10 6 9 8-1 4-8-4-8z" /></g>
        <g filter="url(#rough)"><use href="#land" fill="#e8ebe0" /></g>
        <g clip-path="url(#landclip)" shape-rendering="crispEdges"><path :d="blue" fill="#a3d1e0" /><path :d="gold" fill="#d0bb70" /></g>
        <g filter="url(#rough)" fill="none">
          <path class="bo" d="M608 450l-10 18-10 12 2 8 14 4 8-10 8 12 14 1M575 865l10-2 4 8 20-2 14 2 8 10-10 14-2 24-4 14M738 840l12 4 15 2 8-3 16 8 22-1M788 592l18 6 14 14 20 10 18 14 14 10 10-2M806 588l12 4 16-6 22 2 18-6 10-14 14-6M880 642l16 12 28 8-10 22-4 22-12 16-6 18-12 18 22-6 8 22 22-6 20-14 12-12 14 5M896 735l0 18 6 26-6 28 10 8M910 705l20-4 29 6M899 570l-5 30-12 24 8 14M930 463l30 6" />
          <path class="rg" d="M787 630v25l-18 15-20 14-22-8-16 8M770 675l0 22-18 18-12 4-6 26M752 715l14 10 20 14 22 2-2 28-8 22-26 10-12 24-5 20M806 740l18-10 8-30-8-28-6-22M822 672l16 22 30 10 12-10 20 10M830 700l20 28 22 18-22 14-26 10-12 12 10 8 18 12 18 2 12 14M838 760l28-14 30 4M798 783l20 0 12 16-6 18M609 822l2 24-10 26M665 860l20-6 30 6 28-8M613 910l30-12 20 6 40-10M750 850l-18 22-20 26-10 22M920 510l16 14 4 14 14-4M890 585l30 12 18-14 20 8M899 530l-5 22M936 600l-20 24-16 28M720 640l30 24M866 546l30-8 12-30M880 565l8-22M940 630l20 10" />
          <path class="riv" d="M925 400l12 6 12-4M918 445l10 6M742 492l12 6M745 580l25-3M595 520l12-6M902 600l14-12M640 418l14-22M648 410l14-16M880 260l-20 10M895 210l-30 8M905 190l-40 6" />
        </g>
        <circle v-for="([x, y], i) in towns" :key="i" :cx="x" :cy="y" r="1.900" class="town" />
        <text v-for="(l, i) in labels" :key="'t' + i" :x="l[1]" :y="l[3] + 3.500" :textLength="l[2] - l[1]" :class="'l' + l[4]">{{ l[0] }}</text>
      </svg>
      <div class="vsplit r" />
      <aside class="right">
        <div class="ptitle"><b>Processing Toolbox</b><svg><use href="#float" /></svg><svg><use href="#close" /></svg></div>
        <div class="ptools rt">
          <span class="mini"><svg><use href="#gears" /></svg></span><span class="mini"><svg><use href="#python" /></svg></span>
          <svg><use href="#hist" /></svg><span class="press"><svg><use href="#doc" /></svg></span><svg class="ed"><use href="#edit" /></svg><svg class="wr"><use href="#wrench" /></svg>
        </div>
        <div class="search"><svg><use href="#mag" /></svg>Search...</div>
        <div class="box algs">
          <ul class="tree">
            <li v-for="(a, i) in algs" :key="a"><i class="tw shut" /><svg><use :href="i ? '#q' : '#hist'" /></svg>{{ a }}</li>
          </ul>
          <div class="scroll"><span class="sb"><i class="up" /></span><span class="thumb" /><span class="track" /><span class="sb"><i class="down" /></span></div>
        </div>
        <div class="split s2" />
        <div class="ptitle rv"><b>Results Viewer</b><svg><use href="#float" /></svg><svg><use href="#close" /></svg></div>
        <div class="box res" />
        <div class="split s3" />
        <div class="box last" />
      </aside>
    </main>

    <footer class="status">
      <div class="f loc"><svg><use href="#mag" /></svg>Type to locate (⌘K)</div>
      <div class="clip c1"><span>Coordinate</span></div>
      <div class="f c2">-1858887,6552906</div>
      <svg class="ext" viewBox="0 0 20 20"><path d="M3 3l3 5M8 1l1 6M2 8l5 5" stroke="#e8ebe0" stroke-width="2" /><path d="M7 10l4-3 5 3v5l-4 4-5-3z" fill="none" stroke="#e8ebe0" stroke-width="1.500" /><path d="M9 11l4 5M12 9l3 5" stroke="#9a9c96" stroke-width="1.300" /></svg>
      <div class="clip c3"><span>Scale</span></div>
      <div class="f c4">1:39686896</div><div class="drop"><i class="down" /></div>
      <svg class="lock" viewBox="0 0 16 20"><path d="M4 10V6a4 4 0 0 1 8 0v4" fill="none" stroke="#9a9c96" stroke-width="1.800" /><rect x="1" y="9" width="14" height="10" rx="1.500" fill="#80807a" /></svg>
      <div class="clip c5"><span>Magnifier</span></div>
      <div class="f c6">100%</div><div class="spin"><i class="up" /><i class="down" /></div>
      <div class="clip c7"><span>Rotation</span></div>
      <div class="f c8">0.0 °</div><div class="spin"><i class="up" /><i class="down" /></div>
      <span class="check sc"><svg viewBox="0 0 18 18"><path d="M5 10l3 4 5-10" /></svg></span><span class="rend">Render</span>
      <svg class="crs" viewBox="0 0 20 20"><circle cx="10" cy="10" r="8" fill="#9a9c96" /><path d="M10 2v16M2 10h16M4 5q6 3 12 0M4 15q6-3 12 0M6 3q-4 7 0 14M14 3q4 7 0 14" stroke="#505354" fill="none" /></svg><span class="epsg">EPSG:3857</span>
      <svg class="msg" viewBox="0 0 22 20"><ellipse cx="11" cy="9" rx="10" ry="8" fill="#696b68" /><path d="M14 14l5 6-1-9z" fill="#696b68" /></svg>
    </footer>
  </div>
</template>

<style>
html, body { margin: 0; background: #333; overflow: hidden; }
</style>
<style scoped>
.app { width: 1400px; height: 968px; overflow: hidden; display: flex; flex-direction: column; background: #333; color: #e8ebe0; font: 16px/23px Inter, "Liberation Sans", sans-serif; }
.sprite { position: absolute; }
.title { height: 27px; padding: 0 0 6px 4px; display: flex; align-items: center; gap: 10px; background: #393a3a; border-bottom: 1px solid #1e1e1e; font-weight: 600; font-size: 16.2px; letter-spacing: .42px; flex: none; }
.title span { margin-left: 515px; color: #c8dcdc; }
.light { width: 16px; height: 16px; border-radius: 50%; background: #d0bb70; }
.light.off { background: #696b68; }
.bar { height: 46px; padding-bottom: 2px; flex: none; display: flex; align-items: center; border-bottom: 1px solid #80807a; box-shadow: inset 0 -2px #262626; }
.bar1 { height: 48px; padding-bottom: 1px; }
.bar2 { height: 47px; padding-bottom: 1px; }
.bar2 .first { margin-right: 2px; }
.grip { width: 8px; height: 24px; background: radial-gradient(circle at 1px 1.500px, #80807a 1.100px, transparent 1.300px) 0 0 / 3px 3.500px; flex: none; display: block; }
.grip.first { margin-right: 1px; width: 7px; }
.gw { display: flex; justify-content: center; flex: none; }
.tool { width: 42.6px; height: 42px; flex: none; display: flex; align-items: center; justify-content: center; position: relative; }
.tool.on::before { content: ""; position: absolute; inset: 2px 2px; border: 1px solid #505354; border-radius: 3px; }
.shape { padding-left: 4px; margin-right: -3px; box-sizing: border-box; width: 45.6px; }
.menu::after { content: ""; position: absolute; right: 3px; bottom: 5px; border: 4px solid transparent; border-top-color: #e8ebe0; border-bottom: 0; }
.ic { width: 32px; height: 32px; position: relative; }
.aw { width: 15.2px; display: flex; justify-content: center; flex: none; }
.down { width: 0; height: 0; border: 5px solid transparent; border-top-color: #b9d8df; border-bottom: 0; }
.up { width: 0; height: 0; border: 5px solid transparent; border-bottom-color: #c9dcdb; border-top: 0; }
.sa { font: bold 20px "Liberation Sans", sans-serif; fill: #c9dcdb; }
.t11 { font: bold 11.500px "Liberation Sans", sans-serif; fill: #1e1e1e; }
.tk { font: bold 10.500px "Liberation Sans", sans-serif; fill: #333; }
.tg { font: bold 10.500px "Liberation Sans", sans-serif; fill: #2a2a2a; }
.main { height: 757px; flex: none; display: flex; }
.left { width: 394px; display: flex; flex-direction: column; flex: none; }
.ptitle { height: 26px; box-sizing: border-box; display: flex; align-items: center; padding: 0 2px 0 0; flex: none; }
.ptitle b { flex: 1; font-size: 14.2px; font-weight: 500; margin-left: -1px; }
.ptitle svg { width: 14px; height: 14px; margin-left: 4px; }
.ptools { height: 40px; display: flex; align-items: center; padding: 0 0 3px 4px; gap: 12.700px; flex: none; box-sizing: border-box; }
.ptools svg { width: 19.5px; height: 19.5px; flex: none; display: block; }
.mini { position: relative; }
.mini::after { content: ""; position: absolute; right: -3px; bottom: -2px; border: 4px solid transparent; border-top-color: #b9d8df; border-bottom: 0; }
.box { background: #1e1e1e; overflow: hidden; flex: none; }
.browser { height: 407px; display: flex; }
.tree { list-style: none; margin: 0; padding: 0; flex: 1; letter-spacing: .2px; }
.tree li { height: 23.15px; display: flex; align-items: center; white-space: nowrap; }
.tree svg { width: 19px; height: 19px; margin-right: 8.5px; flex: none; }
.nest { padding-left: 20.5px; }
.tw { width: 20px; display: flex; flex: none; }
.shut::before { content: ""; margin-left: 3px; border: 4px solid transparent; border-left: 5px solid #a3d1e0; border-right: 0; }
.open::before { content: ""; border: 5px solid transparent; border-top-color: #a3d1e0; border-bottom: 0; }
.scroll { width: 17px; flex: none; margin-right: 1px; display: flex; flex-direction: column; background: #3c3d3d; }
.sb { height: 15px; flex: none; border: 1px solid #5c5e5d; display: flex; align-items: center; justify-content: center; }
.thumb { height: 122px; flex: none; border: 1px solid #696b68; background: #484a4a; }
.track { flex: 1; }
.split { height: 9px; flex: none; background: radial-gradient(circle, #9a9c96 1px, transparent 1.300px) 0 0 / 3.700px 9px; width: 23px; margin-left: 185px; }
.lay { height: 24px; }
.lt { height: 41px; }
.lt .down { margin: 0 -3px 0 -4px; }
.layers { height: 206px; }
.sel { height: 23px; background: #1e6fd0; display: flex; align-items: center; width: 394px; }
.sel .down { margin-left: 3px; border-top-color: #a3d1e0; }
.check { width: 18px; height: 18px; background: #1e1e1e; margin-left: 11px; border-radius: 2px; }
.check svg { display: block; fill: none; stroke: #e8ebe0; stroke-width: 2; }
.lic { width: 18px; height: 18px; margin: 0 8.5px 0 10px; }
.sel b { text-decoration: underline; text-underline-offset: 2px; text-decoration-thickness: 2px; font-weight: 700; letter-spacing: .6px; }
.vsplit { width: 10px; background: repeating-linear-gradient(#80807a 0 2px, transparent 2px 3.700px) 5px 369px / 3px 22px no-repeat; border-right: 1px solid #1e1e1e; box-sizing: border-box; flex: none; }
.vsplit.r { width: 9px; border: 0; }
.map { flex: none; margin-top: 2px; display: block; background: #a3d1e0; }
.sea { fill: none; stroke: #80807a; stroke-width: 1; stroke-dasharray: 1.3 2.7; }
.bo { stroke: #80807a; stroke-width: 1.1; stroke-dasharray: 3 1; }
.rg { stroke: #d0bb70; stroke-width: 1; stroke-dasharray: 2 2; }
.riv { stroke: #a3d1e0; stroke-width: 1.6; stroke-dasharray: 3 1; }
.town { fill: #e8ebe0; stroke: #505354; }
.map text { font-family: "Noto Sans", sans-serif; font-size: 10px; paint-order: stroke; stroke: #e8ebe0; stroke-width: 2px; stroke-linejoin: round; }
.map .ld { fill: #333; }
.map .lg { fill: #74786f; font-size: 10.8px; }
.map .lr { fill: #7c8388; font-style: italic; font-size: 8.8px; stroke-width: 1px; }
.map .lb { fill: #1e1e1e; font-style: italic; font-weight: 600; }
.right { width: 432px; display: flex; flex-direction: column; flex: none; overflow: hidden; }
.right .ptitle { padding-right: 0; margin-right: -1px; }
.right .ptitle b { margin-left: 5px; }
.rt { padding-left: 11px; height: 40px; }
.press { border: 1px solid #696b68; border-radius: 3px; padding: 4px; background: #3a3a3a; margin: 0 -6px; }
.ed { margin-left: 10px; }
.wr { margin-left: 9px; }
.search { height: 31px; background: #1e1e1e; display: flex; align-items: center; color: #9a9c96; font-size: 16px; letter-spacing: .1px; border-bottom: 1px solid #3c3d3d; box-sizing: border-box; }
.search svg { width: 19px; height: 19px; margin: 0 8px 0 10px; }
.algs { height: 153px; display: flex; }
.algs .shut::before { margin-left: 12px; }
.algs .tw { width: 32px; }
.algs .tree svg { margin-right: 8px; }
.algs .scroll { margin-right: -2px; }
.algs .thumb { height: 32px; }
.s2 { margin-left: 209px; }
.s3 { margin-left: 209px; height: 7px; }
.right .rv { height: 25px; }
.res { height: 245px; }
.last { height: 217px; }
.status { flex: 1; display: flex; align-items: center; padding-top: 3px; font-size: 15px; }
.status svg { flex: none; }
.f { height: 30px; background: #1e1e1e; display: flex; align-items: center; box-sizing: border-box; white-space: nowrap; flex: none; letter-spacing: -.17px; }
.loc { width: 273px; color: #9a9c96; font-size: 16px; letter-spacing: .17px; }
.loc svg { width: 18px; height: 18px; margin: 0 9px 0 9px; }
.clip { overflow: hidden; display: flex; justify-content: center; flex: none; font-size: 14.5px; }
.c1 { width: 62px; margin-left: 33px; }
.c2 { width: 153px; margin-left: 4px; padding-left: 10px; }
.ext { width: 20px; height: 20px; margin: 0 15px 0 7px; }
.c3 { width: 24px; }
.c4 { width: 93px; margin-left: 5px; padding-left: 4px; }
.drop { width: 24px; height: 28px; border: 1px solid #505354; background: #484a4a; box-sizing: border-box; display: flex; align-items: center; justify-content: center; flex: none; }
.drop .down { border-top-color: #262626; }
.lock { width: 16px; height: 20px; margin: 0 10px 0 17px; }
.c5 { width: 52px; }
.c6 { width: 99px; margin-left: 4px; padding-left: 6px; }
.spin { width: 16px; height: 28px; border: 1px solid #505354; box-sizing: border-box; display: flex; flex-direction: column; align-items: center; justify-content: center; gap: 6px; flex: none; }
.c7 { width: 44px; margin-left: 13px; }
.c8 { width: 101px; margin-left: 11px; padding-left: 6px; }
.sc { width: 17px; height: 17px; margin-left: 11px; flex: none; }
.rend { margin-left: 7px; width: 48px; font-size: 14.500px; }
.crs { width: 20px; height: 20px; margin-left: 20px; }
.epsg { color: #1e1e1e; margin-left: 3px; width: 77px; font-size: 14.500px; }
.msg { width: 22px; height: 20px; margin-left: 29px; }
</style>
